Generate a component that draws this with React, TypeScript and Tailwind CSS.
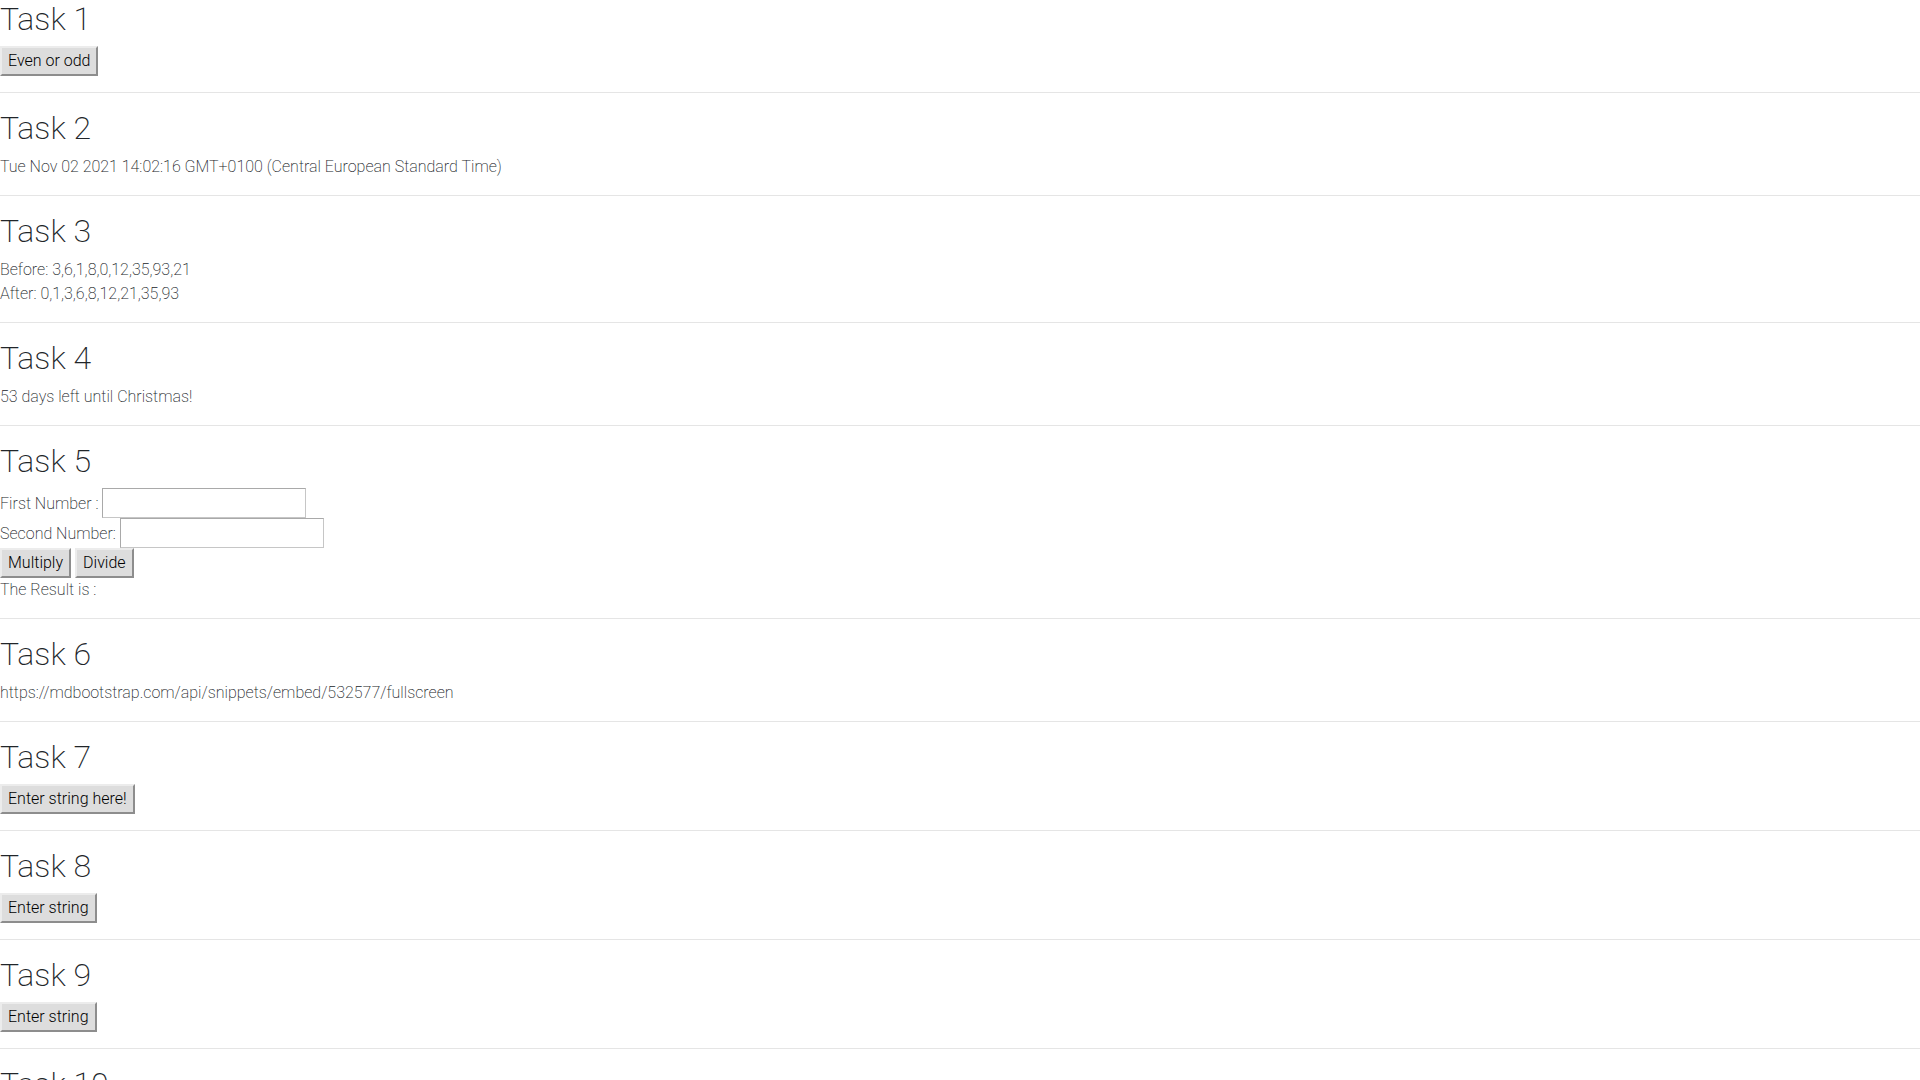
import React, { FC, ReactNode } from 'react';

const TaskButton: FC<{ children: ReactNode }> = ({ children }) => (
    <button className="bg-[#dddddd] border-2 border-t-[#ececec] border-l-[#ececec] border-r-[#8d8d8d] border-b-[#8d8d8d] px-[6px] py-px text-black font-light leading-normal cursor-default">
        {children}
    </button>
);

const TaskTitle: FC<{ children: ReactNode }> = ({ children }) => (
    <h2 className="text-[32px] leading-[38px] font-[200] mb-2">{children}</h2>
);

const Divider: FC = () => <hr className="my-4 border-0 border-t border-black/10" />;

const NumberField: FC<{ label: string }> = ({ label }) => (
    <div className="flex items-baseline">
        <span>{label}</span>
        <input
            type="text"
            className="ml-1 w-[204px] h-[30px] px-[2px] bg-white border border-[#a9a9a9] border-b-[#c6c6c6] border-r-[#c6c6c6] leading-normal outline-none"
        />
    </div>
);

const App: FC = () => {
    return (
        <div className="min-h-screen bg-white text-[#212529] text-base leading-normal font-[200] font-['Roboto','Liberation_Sans',sans-serif]">
            <section>
                <TaskTitle>Task 1</TaskTitle>
                <div className="flex"><TaskButton>Even or odd</TaskButton></div>
            </section>
            <Divider />

            <section>
                <TaskTitle>Task 2</TaskTitle>
                <p className="mb-4">Tue Nov 02 2021 14:02:16 GMT+0100 (Central European Standard Time)</p>
            </section>
            <Divider />

            <section>
                <TaskTitle>Task 3</TaskTitle>
                <p className="mb-4">
                    Before: 3,6,1,8,0,12,35,93,21
                    <br />
                    After: 0,1,3,6,8,12,21,35,93
                </p>
            </section>
            <Divider />

            <section>
                <TaskTitle>Task 4</TaskTitle>
                <p className="mb-4">53 days left until Christmas!</p>
            </section>
            <Divider />

            <section>
                <TaskTitle>Task 5</TaskTitle>
                <NumberField label="First Number :" />
                <NumberField label="Second Number:" />
                <div className="flex gap-1">
                    <TaskButton>Multiply</TaskButton>
                    <TaskButton>Divide</TaskButton>
                </div>
                <div>The Result is :</div>
            </section>
            <Divider />

            <section>
                <TaskTitle>Task 6</TaskTitle>
                <p className="mb-4">https://mdbootstrap.com/api/snippets/embed/532577/fullscreen</p>
            </section>
            <Divider />

            <section>
                <TaskTitle>Task 7</TaskTitle>
                <div className="flex"><TaskButton>Enter string here!</TaskButton></div>
            </section>
            <Divider />

            <section>
                <TaskTitle>Task 8</TaskTitle>
                <div className="flex"><TaskButton>Enter string</TaskButton></div>
            </section>
            <Divider />

            <section>
                <TaskTitle>Task 9</TaskTitle>
                <div className="flex"><TaskButton>Enter string</TaskButton></div>
            </section>
            <Divider />

            <section>
                <TaskTitle>Task 10</TaskTitle>
                <div className="flex"><TaskButton>Enter string</TaskButton></div>
            </section>
            <Divider />
        </div>
    );
};

export default App;
